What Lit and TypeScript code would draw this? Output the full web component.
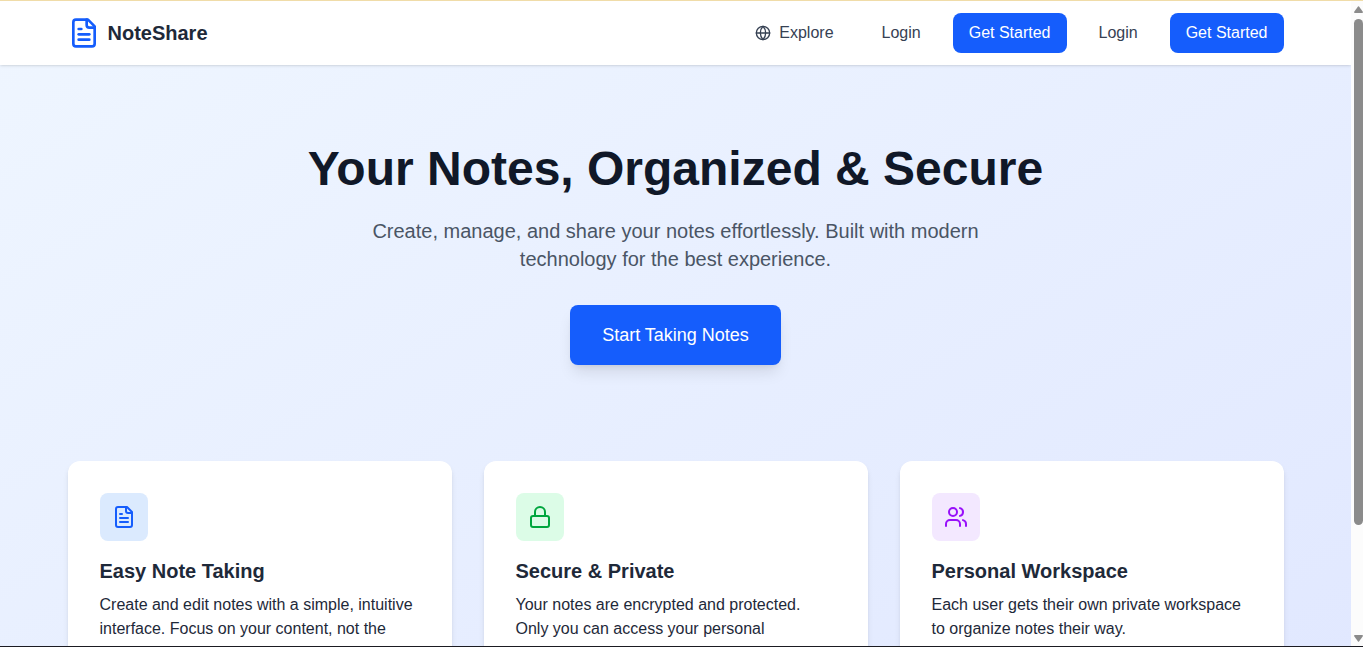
import { LitElement, html, css, svg } from "lit";
import { customElement, property } from "lit/decorators.js";

type IconName = "file" | "globe" | "lock" | "users";

const ICONS = {
  file: svg`
    <path d="M15 2H6a2 2 0 0 0-2 2v16a2 2 0 0 0 2 2h12a2 2 0 0 0 2-2V7Z"/>
    <path d="M14 2v4a2 2 0 0 0 2 2h4"/>
    <path d="M10 9H8"/><path d="M16 13H8"/><path d="M16 17H8"/>`,
  globe: svg`
    <circle cx="12" cy="12" r="10"/>
    <path d="M12 2a14.5 14.5 0 0 0 0 20 14.5 14.5 0 0 0 0-20"/>
    <path d="M2 12h20"/>`,
  lock: svg`
    <rect width="18" height="11" x="3" y="11" rx="2" ry="2"/>
    <path d="M7 11V7a5 5 0 0 1 10 0v4"/>`,
  users: svg`
    <path d="M16 21v-2a4 4 0 0 0-4-4H6a4 4 0 0 0-4 4v2"/>
    <circle cx="9" cy="7" r="4"/>
    <path d="M22 21v-2a4 4 0 0 0-3-3.87"/>
    <path d="M16 3.13a4 4 0 0 1 0 7.75"/>`,
};

@customElement("line-icon")
export class LineIcon extends LitElement {
  @property() name: IconName = "file";

  static styles = css`
    :host {
      display: block;
      width: 24px;
      height: 24px;
      flex: none;
    }
    svg {
      display: block;
      width: 100%;
      height: 100%;
      fill: none;
      stroke: currentColor;
      stroke-width: 2;
      stroke-linecap: round;
      stroke-linejoin: round;
    }
  `;

  render() {
    return html`<svg viewBox="0 0 24 24" aria-hidden="true">${ICONS[this.name]}</svg>`;
  }
}

interface Feature {
  icon: IconName;
  tone: string;
  title: string;
  text: string;
}

const FEATURES: Feature[] = [
  {
    icon: "file",
    tone: "blue",
    title: "Easy Note Taking",
    text: "Create and edit notes with a simple, intuitive interface. Focus on your content, not the complexity.",
  },
  {
    icon: "lock",
    tone: "green",
    title: "Secure & Private",
    text: "Your notes are encrypted and protected. Only you can access your personal information.",
  },
  {
    icon: "users",
    tone: "purple",
    title: "Personal Workspace",
    text: "Each user gets their own private workspace to organize notes their way.",
  },
];

@customElement("app-root")
export class AppRoot extends LitElement {
  static styles = css`
    :host {
      display: flex;
      box-sizing: border-box;
      height: 100vh;
      border-top: 1px solid #f0dca8;
      border-bottom: 1px solid #1b1b22;
      font-family: "Liberation Sans", Arial, sans-serif;
      font-size: 16px;
      line-height: 24px;
      color: #1e2939;
    }
    * {
      box-sizing: border-box;
    }
    h1,
    h2,
    p {
      margin: 0;
    }
    a {
      color: inherit;
      text-decoration: none;
    }
    .page {
      flex: 1;
      min-width: 0;
      overflow-y: auto;
      scrollbar-width: none;
    }
    .surface {
      min-height: 100%;
      background: linear-gradient(to bottom right in oklab, #eff6ff, #e0e7ff);
    }
    .container {
      max-width: 1280px;
      margin: 0 auto;
      padding: 0 32px;
    }
    .bar {
      background: #fff;
      box-shadow: 0 1px 3px rgb(0 0 0 / 0.1), 0 1px 2px -1px rgb(0 0 0 / 0.1);
    }
    .bar-row {
      display: flex;
      align-items: center;
      justify-content: space-between;
      height: 64px;
    }
    .brand {
      display: flex;
      align-items: center;
      gap: 8px;
      font-size: 20px;
      line-height: 28px;
      font-weight: 700;
    }
    .brand line-icon {
      width: 32px;
      height: 32px;
      color: #155dfc;
    }
    .links {
      display: flex;
      align-items: center;
      gap: 16px;
      color: #364153;
    }
    .link {
      display: flex;
      align-items: center;
      gap: 8px;
      padding: 8px 16px;
      border-radius: 8px;
    }
    .link line-icon {
      width: 16px;
      height: 16px;
    }
    .primary {
      background: #155dfc;
      color: #fff;
    }
    .content {
      padding-top: 80px;
      padding-bottom: 80px;
    }
    .hero {
      display: flex;
      flex-direction: column;
      align-items: center;
      text-align: center;
    }
    h1 {
      font-size: 48px;
      line-height: 48px;
      font-weight: 700;
      color: #101828;
    }
    .lead {
      max-width: 672px;
      margin: 24px 0 32px;
      font-size: 20px;
      line-height: 28px;
      color: #4a5565;
    }
    .cta {
      padding: 16px 32px;
      border-radius: 8px;
      background: #155dfc;
      color: #fff;
      font-size: 18px;
      line-height: 28px;
      box-shadow: 0 10px 15px -3px rgb(0 0 0 / 0.1), 0 4px 6px -4px rgb(0 0 0 / 0.1);
    }
    .cards {
      display: grid;
      grid-template-columns: repeat(auto-fit, minmax(280px, 1fr));
      gap: 32px;
      margin-top: 96px;
    }
    .card {
      padding: 32px;
      border-radius: 12px;
      background: #fff;
      box-shadow: 0 4px 6px -1px rgb(0 0 0 / 0.1), 0 2px 4px -2px rgb(0 0 0 / 0.1);
    }
    .badge {
      display: grid;
      place-items: center;
      width: 48px;
      height: 48px;
      border-radius: 8px;
    }
    .blue {
      background: #dbeafe;
      color: #155dfc;
    }
    .green {
      background: #dcfce7;
      color: #00a63e;
    }
    .purple {
      background: #f3e8ff;
      color: #9810fa;
    }
    h2 {
      margin: 16px 0 8px;
      font-size: 20px;
      line-height: 28px;
      font-weight: 700;
    }
    .track {
      display: flex;
      flex-direction: column;
      flex: none;
      width: 12px;
      padding: 5px 0 4px 3px;
      background: #fcfcfc;
    }
    .arrow {
      display: block;
      width: 9px;
      height: 7px;
      fill: #8b8b8b;
    }
    .lane {
      flex: 1;
      margin: 6px 0;
    }
    .thumb {
      height: 83%;
      border-radius: 5px;
      background: #8b8b8b;
    }
  `;

  render() {
    return html`
      <div class="page">
        <div class="surface">
          <header class="bar">
            <nav class="container bar-row">
              <a class="brand" href="#"><line-icon name="file"></line-icon>NoteShare</a>
              <div class="links">
                <a class="link" href="#explore"><line-icon name="globe"></line-icon>Explore</a>
                <a class="link" href="#login">Login</a>
                <a class="link primary" href="#register">Get Started</a>
                <a class="link" href="#login">Login</a>
                <a class="link primary" href="#register">Get Started</a>
              </div>
            </nav>
          </header>
          <main class="container content">
            <section class="hero">
              <h1>Your Notes, Organized &amp; Secure</h1>
              <p class="lead">
                Create, manage, and share your notes effortlessly. Built with modern technology for
                the best experience.
              </p>
              <a class="cta" href="#register">Start Taking Notes</a>
            </section>
            <section class="cards">
              ${FEATURES.map(
                (f) => html`
                  <article class="card">
                    <div class="badge ${f.tone}"><line-icon name=${f.icon}></line-icon></div>
                    <h2>${f.title}</h2>
                    <p>${f.text}</p>
                  </article>
                `
              )}
            </section>
          </main>
        </div>
      </div>
      <div class="track" aria-hidden="true">
        <svg class="arrow" viewBox="0 0 9 7"><path d="M4 0.5Q4.5 0 5 0.5L9 6Q9 7 8 7H1Q0 7 0 6Z" /></svg>
        <div class="lane"><div class="thumb"></div></div>
        <svg class="arrow" viewBox="0 0 9 7"><path d="M4 6.5Q4.5 7 5 6.5L9 1Q9 0 8 0H1Q0 0 0 1Z" /></svg>
      </div>
    `;
  }
}
